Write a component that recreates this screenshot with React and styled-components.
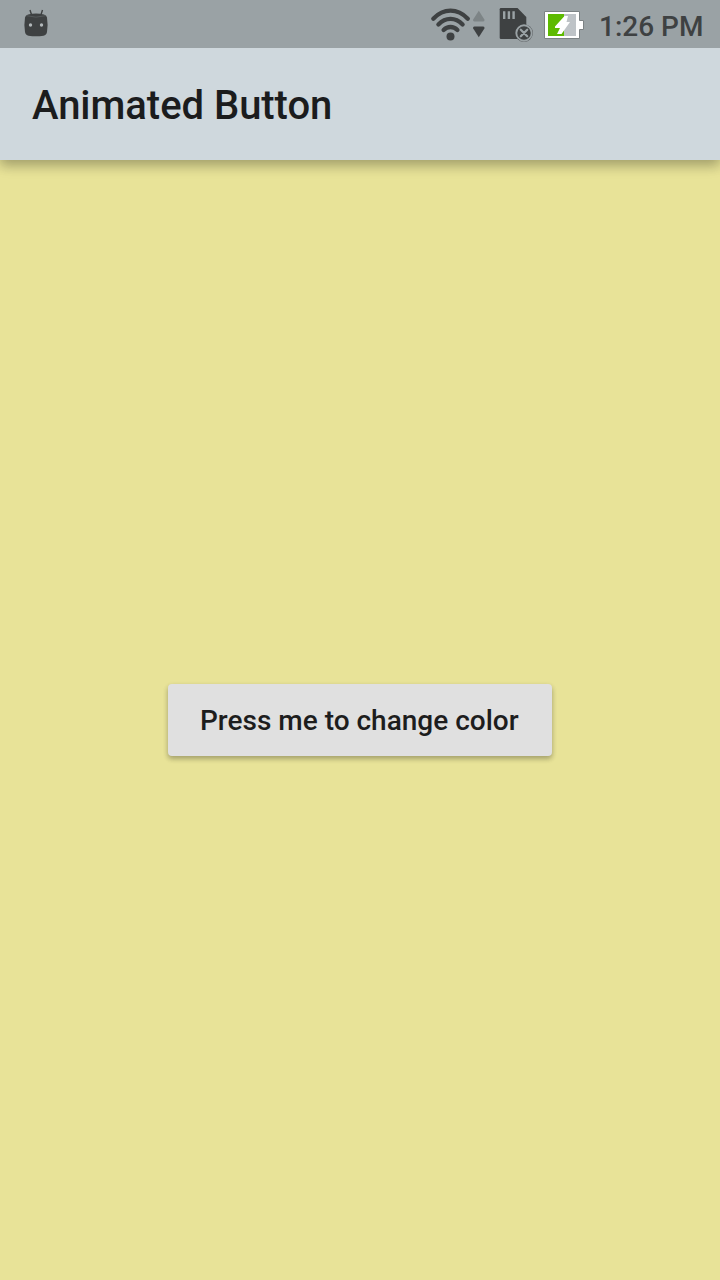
import React, { useState } from 'react';
import styled, { createGlobalStyle } from 'styled-components';

const GlobalStyle = createGlobalStyle`
  * { box-sizing: border-box; }
  body { margin: 0; font-family: Roboto, sans-serif; }
`;

const Screen = styled.div`
  display: flex;
  flex-direction: column;
  width: 100%;
  height: 100vh;
  overflow: hidden;
`;

const Header = styled.header`
  position: relative;
  z-index: 1;
  flex: none;
  background: #cfd8dd;
  box-shadow:
    0 4px 12px rgba(0, 0, 0, 0.16),
    0 6px 12px rgba(0, 0, 0, 0.18);
`;

const StatusBar = styled.div`
  display: flex;
  align-items: center;
  justify-content: space-between;
  height: 48px;
  padding: 0 16px 0 20px;
  background: #9aa2a5;
  color: #3e4142;
`;

const StatusGroup = styled.div`
  display: flex;
  align-items: center;
`;

const StatusIcon = styled.svg`
  display: block;
  height: 48px;
  width: ${({ $width }) => $width}px;
`;

const Clock = styled.span`
  width: 105px;
  margin-left: 12px;
  padding-top: 5px;
  font-size: 28px;
  font-weight: 500;
  line-height: 32px;
  white-space: nowrap;
`;

const AppBar = styled.div`
  display: flex;
  align-items: center;
  height: 112px;
  padding: 4px 32px 0;
`;

const Title = styled.h1`
  margin: 0;
  color: #1b1c1d;
  font-size: 40px;
  font-weight: 500;
  line-height: 48px;
  letter-spacing: -0.04px;
  white-space: nowrap;
`;

const Body = styled.main`
  display: flex;
  flex: 1;
  align-items: center;
  justify-content: center;
  background: ${({ $color }) => $color};
  transition: background 500ms;
`;

const RaisedButton = styled.button`
  height: 72px;
  padding: 2px 32px 0;
  width: 384px;
  border: 0;
  border-radius: 4px;
  background: #e0e0e0;
  color: #1d1d1d;
  font-family: inherit;
  font-size: 28px;
  font-weight: 500;
  line-height: 32px;
  text-align: left;
  white-space: nowrap;
  box-shadow:
    0 3px 5px rgba(0, 0, 0, 0.24),
    0 2px 6px rgba(0, 0, 0, 0.08);
`;

const DebugIcon = () => (
  <StatusIcon $width={32} viewBox="20 0 32 48" fill="currentColor">
    <path d="M30 10l1.6 5M42.5 10l-1.6 5" stroke="currentColor" strokeWidth="1.4" fill="none" />
    <path d="M25 17.5Q25.3 15.5 28 14.6Q36 12.6 44 14.6Q46.7 15.5 47 17.5Q48.2 25 47 32Q46.4 35.2 43.5 35.7Q36 36.8 28.5 35.7Q25.6 35.2 25 32Q23.8 25 25 17.5Z" />
    <path d="M26.5 15.7Q36 18.6 45.5 15.7" stroke="#5b6061" strokeWidth=".8" fill="none" />
    <circle cx="30.5" cy="25" r="1.7" fill="#b1b7b9" />
    <circle cx="41.5" cy="25" r="1.7" fill="#b1b7b9" />
  </StatusIcon>
);

const WifiIcon = () => (
  <StatusIcon $width={62} viewBox="428 0 62 48" fill="none">
    <g stroke="currentColor" strokeWidth="4.3" strokeLinecap="round">
      <path d="M433.3 18.7Q441 10.7 450.5 10.7T467.8 18.7" />
      <path d="M438.4 24.4Q443.8 18.9 450.5 18.9T462.6 24.4" />
      <path d="M443.6 30Q446.6 27 450.5 27T457.4 30" />
    </g>
    <circle cx="450.5" cy="36.4" r="4" fill="currentColor" />
    <path d="M478.8 10.8L484.4 19.5Q485 21.5 483.2 21.5H474.4Q472.6 21.5 473.2 19.5Z" fill="#7d8486" />
    <path d="M478.8 37.2L484.4 28.6Q485 26.6 483.2 26.6H474.4Q472.6 26.6 473.2 28.6Z" fill="currentColor" />
  </StatusIcon>
);

const SdCardIcon = () => (
  <StatusIcon $width={48} viewBox="490 0 48 48" fill="none">
    <path d="M501 8H517.5L526.3 17V39H501Q499.7 39 499.7 37.7V9.3Q499.7 8 501 8Z" fill="currentColor" />
    <path d="M504.2 11.3V19M508.9 11.3V19M513.6 11.3V19" stroke="#9aa2a5" strokeWidth="2.4" />
    <circle cx="524" cy="33" r="8.8" fill="currentColor" />
    <circle cx="524" cy="33" r="7.7" stroke="#9aa2a5" strokeWidth="1.9" />
    <path d="M520.8 29.8L527.2 36.2M527.2 29.8L520.8 36.2" stroke="#9aa2a5" strokeWidth="2.3" strokeLinecap="round" />
  </StatusIcon>
);

const BatteryIcon = () => (
  <StatusIcon $width={49} viewBox="538 0 49 48">
    <path d="M544.5 11.5H579.5V20.5H583.5V29.5H579.5V38.5H544.5Z" fill="#fff" stroke="#7c8284" />
    <path d="M548 14H576V36H548Z" fill="#bec3c7" />
    <path d="M548 14H564V36H548Z" fill="#5dba00" />
    <path d="M564.5 16H568L566.5 22H570L561.5 34H557L560 28H555V26.5Z" fill="#fff" />
  </StatusIcon>
);

export default function App() {
  const palette = ['#e8e398', '#b9dcc4', '#e7bfc0', '#b8cfe8'];
  const [index, setIndex] = useState(0);

  return (
    <Screen>
      <GlobalStyle />
      <Header>
        <StatusBar>
          <DebugIcon />
          <StatusGroup>
            <WifiIcon />
            <SdCardIcon />
            <BatteryIcon />
            <Clock>1:26 PM</Clock>
          </StatusGroup>
        </StatusBar>
        <AppBar>
          <Title>Animated Button</Title>
        </AppBar>
      </Header>
      <Body $color={palette[index]}>
        <RaisedButton onClick={() => setIndex((index + 1) % palette.length)}>
          Press me to change color
        </RaisedButton>
      </Body>
    </Screen>
  );
}
